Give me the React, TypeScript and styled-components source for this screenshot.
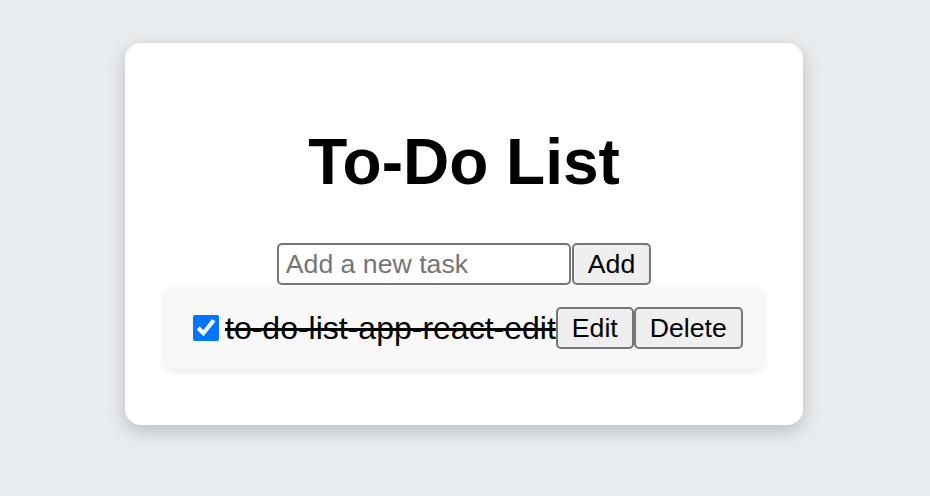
import React, { useState } from "react";
import styled, { createGlobalStyle } from "styled-components";

const GlobalStyle = createGlobalStyle`
  html, body {
    margin: 0;
    padding: 0;
    background: #e9ecef;
    font-family: "Liberation Sans", Arial, sans-serif;
  }
`;

const Page = styled.div`
  box-sizing: border-box;
  min-height: 100vh;
  display: flex;
  justify-content: center;
  align-items: flex-start;
  padding: 43px 2px 0 0;
`;

const Card = styled.div`
  box-sizing: border-box;
  width: 678px;
  padding: 40px 40px 56px;
  background: #ffffff;
  border-radius: 16px;
  box-shadow: 0 6px 18px rgba(0, 0, 0, 0.2);
  text-align: center;
`;

const Title = styled.h1`
  margin: 43px 0 0;
  font-size: 64px;
  line-height: 72px;
  font-weight: bold;
  color: #000;
`;

const Form = styled.form`
  display: flex;
  justify-content: center;
  align-items: center;
  gap: 1px;
  margin-top: 45px;
`;

const TaskInput = styled.input`
  box-sizing: border-box;
  width: 294px;
  height: 42px;
  padding: 0 7px;
  border: 2px solid #767676;
  border-radius: 5px;
  font-family: "Liberation Sans", Arial, sans-serif;
  font-size: 26.67px;
  color: #000;
  background: #fff;
  outline: none;
  &::placeholder {
    color: #757575;
  }
`;

const Button = styled.button`
  box-sizing: border-box;
  height: 42px;
  padding: 0 14px;
  border: 2px solid #767676;
  border-radius: 5px;
  background: #efefef;
  font-family: "Liberation Sans", Arial, sans-serif;
  font-size: 26.67px;
  color: #000;
  cursor: pointer;
  flex-shrink: 0;
`;

const List = styled.ul`
  list-style: none;
  margin: 2px 0 0;
  padding: 0;
`;

const Item = styled.li`
  display: flex;
  align-items: center;
  padding: 20px;
  background: #f8f8f8;
  border-radius: 10px;
  box-shadow: 0 2px 8px rgba(0, 0, 0, 0.1);
`;

const Check = styled.input`
  width: 26px;
  height: 26px;
  margin: 0 6px 0 8px;
  accent-color: #0075ff;
  flex-shrink: 0;
`;

const TaskText = styled.span<{ $done: boolean }>`
  font-size: 32px;
  line-height: 36px;
  color: #000;
  white-space: nowrap;
  text-decoration: ${(p) => (p.$done ? "line-through" : "none")};
  min-width: 0;
  flex-shrink: 1;
`;

export default function App() {
  const [done, setDone] = useState(true);
  const [value, setValue] = useState("");
  return (
    <>
      <GlobalStyle />
      <Page>
        <Card>
          <Title>To-Do List</Title>
          <Form onSubmit={(e) => e.preventDefault()}>
            <TaskInput
              placeholder="Add a new task"
              value={value}
              onChange={(e) => setValue(e.target.value)}
            />
            <Button type="submit">Add</Button>
          </Form>
          <List>
            <Item>
              <Check
                type="checkbox"
                checked={done}
                onChange={() => setDone(!done)}
              />
              <TaskText $done={done}>to-do-list-app-react-edit</TaskText>
              <Button type="button">Edit</Button>
              <Button type="button">Delete</Button>
            </Item>
          </List>
        </Card>
      </Page>
    </>
  );
}
